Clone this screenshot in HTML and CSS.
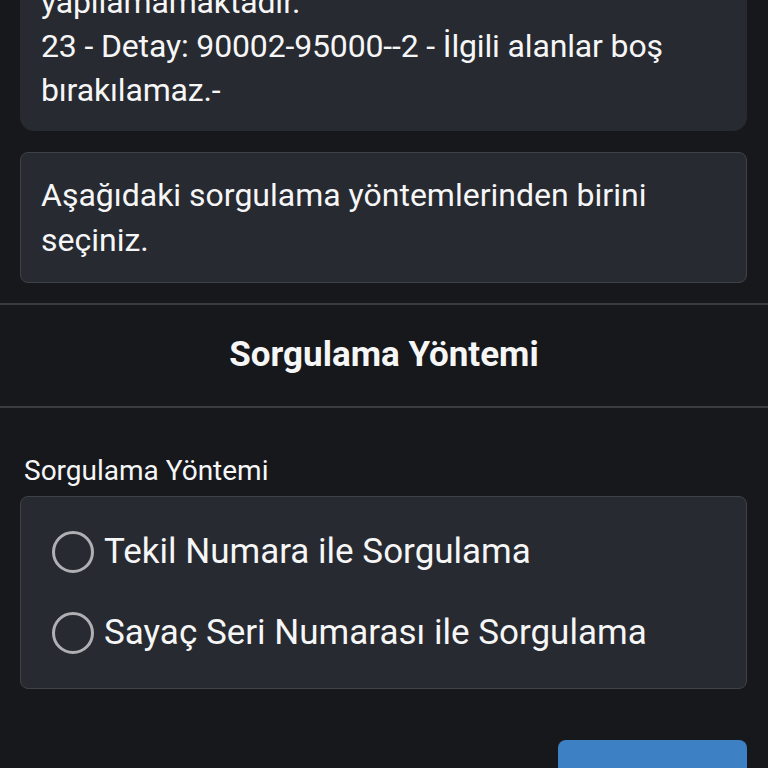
FILE: index.html
```html
<!DOCTYPE html>
<html lang="tr">
<head>
  <meta charset="UTF-8">
  <meta name="viewport" content="width=device-width, initial-scale=1.0">
  <title>Sorgulama Yöntemi</title>
  <link rel="stylesheet" href="styles.css">
</head>
<body>
  <div class="content">
    <div class="card notice">
      <p>yapılamamaktadır.<br>23 - Detay: 90002-95000--2 - İlgili alanlar boş bırakılamaz.-</p>
    </div>

    <div class="card info">
      <p>Aşağıdaki sorgulama yöntemlerinden birini seçiniz.</p>
    </div>
  </div>

  <div class="section-title">
    <h2>Sorgulama Yöntemi</h2>
  </div>

  <div class="content">
    <div class="field-label">Sorgulama Yöntemi</div>
    <div class="card options">
      <label class="option">
        <input type="radio" name="method" value="tekil">
        <span class="radio"></span>
        <span>Tekil Numara ile Sorgulama</span>
      </label>
      <label class="option">
        <input type="radio" name="method" value="sayac">
        <span class="radio"></span>
        <span>Sayaç Seri Numarası ile Sorgulama</span>
      </label>
    </div>

    <div class="actions">
      <button class="btn" type="button"></button>
    </div>
  </div>
</body>
</html>
```

FILE: styles.css
```css
body {
  font-family: Roboto, "Noto Sans", sans-serif;
  background-color: #17181c;
  color: #f6f6f7;
  margin: 0;
  overflow: hidden;
}
p { margin: 0; }
.content {
  padding: 0 21px 0 20px;
}
.card {
  background-color: #272a30;
  border-radius: 8px;
}
.notice {
  margin-top: -40px;
  padding: 20px 21px 19px 21px;
  border-radius: 14px;
  font-size: 32px;
  letter-spacing: -0.15px;
  line-height: 44px;
}
.info {
  margin-top: 21px;
  border: 1px solid #3f4249;
  padding: 20px 20px 19px 20px;
  font-size: 32px;
  line-height: 45px;
}
.section-title {
  margin-top: 20px;
  border-top: 2px solid #3a3c42;
  border-bottom: 2px solid #3a3c42;
  height: 101px;
  display: flex;
  align-items: center;
  justify-content: center;
}
.section-title h2 {
  margin: 0 0 3px 0;
  font-size: 35px;
  font-weight: bold;
}
.field-label {
  margin-top: 45px;
  padding-left: 4px;
  font-size: 28px;
  line-height: 36px;
}
.options {
  margin-top: 7px;
  border: 1px solid #3f4249;
  padding: 14px 31px 15px 31px;
}
.option {
  display: flex;
  align-items: center;
  gap: 10px;
  height: 81px;
  font-size: 35px;
}
.option input {
  display: none;
}
.radio {
  width: 36px;
  height: 36px;
  border: 3px solid #b0b0b4;
  border-radius: 50%;
  flex-shrink: 0;
}
.actions {
  margin-top: 51px;
  display: flex;
  justify-content: flex-end;
}
.btn {
  width: 189px;
  height: 56px;
  border: none;
  border-radius: 8px;
  background-color: #3e80c4;
}
```
